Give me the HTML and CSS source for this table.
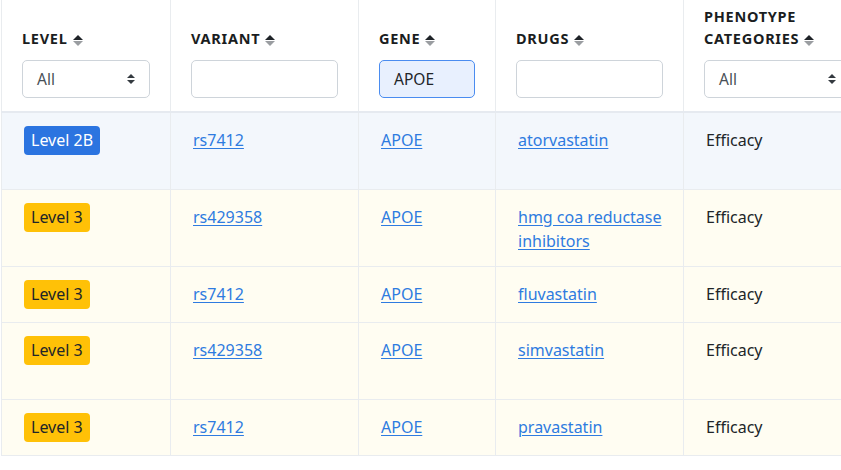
FILE: index.html
```html
<!DOCTYPE html>
<html>
<head>
<meta charset="utf-8">
<link rel="stylesheet" href="styles.css">
</head>
<body>
<div class="wrap">
<table class="grid">
  <colgroup>
    <col class="c1"><col class="c2"><col class="c3"><col class="c4"><col class="c5"><col class="c6">
  </colgroup>
  <thead>
    <tr>
      <th><div class="title">LEVEL<span class="sort"><i class="up"></i><i class="dn"></i></span></div>
        <div class="sel"><span>All</span><span class="caret"><i class="up"></i><i class="dn"></i></span></div></th>
      <th><div class="title">VARIANT<span class="sort"><i class="up"></i><i class="dn"></i></span></div>
        <div class="inp"></div></th>
      <th><div class="title">GENE<span class="sort"><i class="up"></i><i class="dn"></i></span></div>
        <div class="inp focus">APOE</div></th>
      <th><div class="title">DRUGS<span class="sort"><i class="up"></i><i class="dn"></i></span></div>
        <div class="inp"></div></th>
      <th><div class="title">PHENOTYPE CATEGORIES<span class="sort"><i class="up"></i><i class="dn"></i></span></div>
        <div class="sel"><span>All</span><span class="caret"><i class="up"></i><i class="dn"></i></span></div></th>
      <th></th>
    </tr>
  </thead>
  <tbody>
    <tr class="blue tall">
      <td><span class="badge b2">Level 2B</span></td>
      <td><a href="#">rs7412</a></td>
      <td><a href="#">APOE</a></td>
      <td><a href="#">atorvastatin</a></td>
      <td>Efficacy</td>
      <td></td>
    </tr>
    <tr class="yellow tall">
      <td><span class="badge b3">Level 3</span></td>
      <td><a href="#">rs429358</a></td>
      <td><a href="#">APOE</a></td>
      <td><a href="#">hmg coa reductase inhibitors</a></td>
      <td>Efficacy</td>
      <td></td>
    </tr>
    <tr class="yellow short">
      <td><span class="badge b3">Level 3</span></td>
      <td><a href="#">rs7412</a></td>
      <td><a href="#">APOE</a></td>
      <td><a href="#">fluvastatin</a></td>
      <td>Efficacy</td>
      <td></td>
    </tr>
    <tr class="yellow tall">
      <td><span class="badge b3">Level 3</span></td>
      <td><a href="#">rs429358</a></td>
      <td><a href="#">APOE</a></td>
      <td><a href="#">simvastatin</a></td>
      <td>Efficacy</td>
      <td></td>
    </tr>
    <tr class="yellow short">
      <td><span class="badge b3">Level 3</span></td>
      <td><a href="#">rs7412</a></td>
      <td><a href="#">APOE</a></td>
      <td><a href="#">pravastatin</a></td>
      <td>Efficacy</td>
      <td></td>
    </tr>
  </tbody>
</table>
</div>
</body>
</html>
```
FILE: styles.css
```css
html, body {
  margin: 0;
  padding: 0;
  background: #ffffff;
}
body {
  font-family: "Noto Sans", "Open Sans", sans-serif;
  font-size: 16px;
  color: #212529;
  overflow: hidden;
}
.wrap {
  width: 841px;
  height: 470px;
  overflow: hidden;
}
.grid {
  border-collapse: collapse;
  table-layout: fixed;
  width: 1100px;
  margin-left: 1px;
}
.c1 { width: 169px; }
.c2 { width: 188px; }
.c3 { width: 137px; }
.c4 { width: 188px; }
.c5 { width: 188px; }
.c6 { width: 230px; }

th, td {
  border: 1px solid #e9ecef;
  padding: 0 20px;
  text-align: left;
}
thead th {
  border-top: none;
  border-bottom: 2px solid #e6eaf0;
  vertical-align: bottom;
  padding-top: 5px;
  padding-bottom: 13px;
  font-weight: 700;
}
.title {
  font-size: 14.5px;
  letter-spacing: 0.05em;
  line-height: 22px;
  margin-bottom: 11px;
  color: #1a1d21;
}
.sort {
  display: inline-flex;
  flex-direction: column;
  gap: 1px;
  margin-left: 5px;
  vertical-align: 4px;
}
.sort .up, .caret .up {
  width: 0; height: 0;
  border-left: 5px solid transparent;
  border-right: 5px solid transparent;
  border-bottom: 5px solid #1f2328;
}
.sort .dn, .caret .dn {
  width: 0; height: 0;
  border-left: 5px solid transparent;
  border-right: 5px solid transparent;
  border-top: 5px solid #9a9da1;
}
.caret {
  display: inline-flex;
  flex-direction: column;
  gap: 2px;
}
.caret .up { border-bottom-color: #343a40; border-left-width: 4.5px; border-right-width: 4.5px; border-bottom-width: 4.5px; }
.caret .dn { border-top-color: #343a40; border-left-width: 4.5px; border-right-width: 4.5px; border-top-width: 4.5px; }

.sel, .inp {
  box-sizing: border-box;
  height: 38px;
  border: 1px solid #ced4da;
  border-radius: 5px;
  background: #fff;
  font-weight: 400;
  font-size: 15.5px;
  color: #212529;
  display: flex;
  align-items: center;
  letter-spacing: 0;
}
.sel {
  justify-content: space-between;
  padding: 0 14px 0 14px;
  color: #495057;
}
.inp {
  padding: 0 14px;
}
.inp.focus {
  background: #e8f0fe;
  border-color: #4a8cf0;
}

tbody td {
  vertical-align: top;
  padding-top: 15px;
  padding-left: 22px;
  line-height: 24px;
}
tr.tall { height: 77px; }
tr.short { height: 56px; }
tr.blue td { background: #f3f7fc; }
tr.yellow td { background: #fffdf2; }

a {
  color: #2e7be0;
  text-decoration: underline;
  text-underline-offset: 2px;
}
.badge {
  display: inline-block;
  padding: 2px 7px 3px;
  border-radius: 4px;
  line-height: 24px;
  margin-top: -4px;
}
.b2 { background: #2b74e0; color: #ffffff; }
.b3 { background: #ffc107; color: #212529; }
```
